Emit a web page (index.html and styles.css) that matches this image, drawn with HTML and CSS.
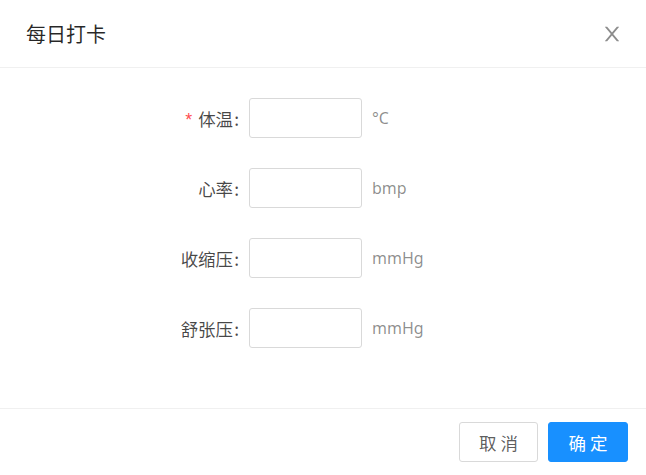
FILE: index.html
```html
<!DOCTYPE html>
<html lang="zh-CN">
<head>
<meta charset="utf-8">
<title>每日打卡</title>
<link rel="stylesheet" href="styles.css">
</head>
<body>
<div class="modal">
  <div class="modal-header">
    <div class="modal-title">每日打卡</div>
    <button class="modal-close" type="button" aria-label="Close">
      <svg viewBox="64 64 896 896" width="20" height="20" fill="currentColor" aria-hidden="true"><path d="M563.8 512l262.5-312.9c4.4-5.2.7-13.1-6.1-13.1h-79.8c-4.7 0-9.2 2.1-12.3 5.7L511.6 449.8 295.1 191.7c-3-3.6-7.5-5.7-12.3-5.7H203c-6.8 0-10.5 7.9-6.1 13.1L459.4 512 196.9 824.9A7.95 7.95 0 00203 838h79.8c4.7 0 9.2-2.1 12.3-5.7l216.5-258.1 216.5 258.1c3 3.6 7.5 5.7 12.3 5.7h79.8c6.8 0 10.5-7.9 6.1-13.1L563.8 512z"/></svg>
    </button>
  </div>
  <div class="modal-body">
    <form class="form">
      <div class="form-row">
        <label class="form-label required">体温</label>
        <div class="form-control"><input class="input" type="text"><span class="unit">°C</span></div>
      </div>
      <div class="form-row">
        <label class="form-label">心率</label>
        <div class="form-control"><input class="input" type="text"><span class="unit">bmp</span></div>
      </div>
      <div class="form-row">
        <label class="form-label">收缩压</label>
        <div class="form-control"><input class="input" type="text"><span class="unit">mmHg</span></div>
      </div>
      <div class="form-row">
        <label class="form-label">舒张压</label>
        <div class="form-control"><input class="input" type="text"><span class="unit">mmHg</span></div>
      </div>
    </form>
  </div>
  <div class="modal-footer">
    <button class="btn" type="button">取 消</button>
    <button class="btn btn-primary" type="button">确 定</button>
  </div>
</div>
</body>
</html>
```

FILE: styles.css
```css
* { box-sizing: border-box; }
html, body { margin: 0; padding: 0; background: #fff; }
body {
  font-family: "Noto Sans", "Noto Sans CJK SC", sans-serif;
  font-size: 17.5px;
  color: rgba(0, 0, 0, 0.85);
}
.modal {
  width: 646px;
  height: 475px;
  display: flex;
  flex-direction: column;
  background: #fff;
}
.modal-header {
  height: 68px;
  flex: 0 0 68px;
  display: flex;
  align-items: center;
  justify-content: space-between;
  padding: 0 24px 0 26px;
  border-bottom: 1px solid #f0f0f0;
}
.modal-title {
  font-family: "Noto Sans CJK SC", sans-serif;
  font-size: 20px;
  line-height: 27px;
  color: rgba(0, 0, 0, 0.85);
}
.modal-close {
  border: 0;
  background: none;
  padding: 0;
  width: 20px;
  height: 20px;
  display: flex;
  color: rgba(0, 0, 0, 0.45);
  margin-top: 1px;
}
.modal-body {
  flex: 1;
  padding: 30px 30px 0;
}
.form {
  display: flex;
  flex-direction: column;
  gap: 30px;
}
.form-row {
  display: flex;
  align-items: center;
  height: 40px;
}
.form-label {
  flex: 0 0 219px;
  text-align: right;
  font-family: "Noto Sans CJK SC", sans-serif;
  font-size: 17.5px;
  color: rgba(0, 0, 0, 0.72);
  white-space: nowrap;
}
.form-label.required::before {
  content: "*";
  color: #ff4d4f;
  margin-right: 4px;
  font-family: "Liberation Mono", monospace;
  font-size: 17.5px;
}
.form-label::after {
  content: ":";
  margin: 0 10px 0 1px;
}
.form-control {
  display: flex;
  align-items: center;
}
.input {
  width: 113px;
  height: 40px;
  border: 1px solid #d9d9d9;
  border-radius: 3px;
  background: #fff;
  padding: 5px 12px;
  font: inherit;
  outline: none;
}
.unit {
  margin-left: 10px;
  color: rgba(0, 0, 0, 0.45);
  font-size: 16px;
}
.modal-footer {
  flex: 0 0 67px;
  display: flex;
  justify-content: flex-end;
  align-items: center;
  gap: 10px;
  padding: 0 18px 0 20px;
  border-top: 1px solid #f0f0f0;
}
.btn {
  height: 40px;
  min-width: 79px;
  padding: 0 18px;
  border: 1px solid #d9d9d9;
  border-radius: 3px;
  background: #fff;
  color: rgba(0, 0, 0, 0.65);
  font-family: "Noto Sans CJK SC", sans-serif;
  font-size: 17.5px;
  cursor: pointer;
}
.btn-primary {
  min-width: 80px;
  background: #1890ff;
  border-color: #1890ff;
  color: #fff;
}
```
